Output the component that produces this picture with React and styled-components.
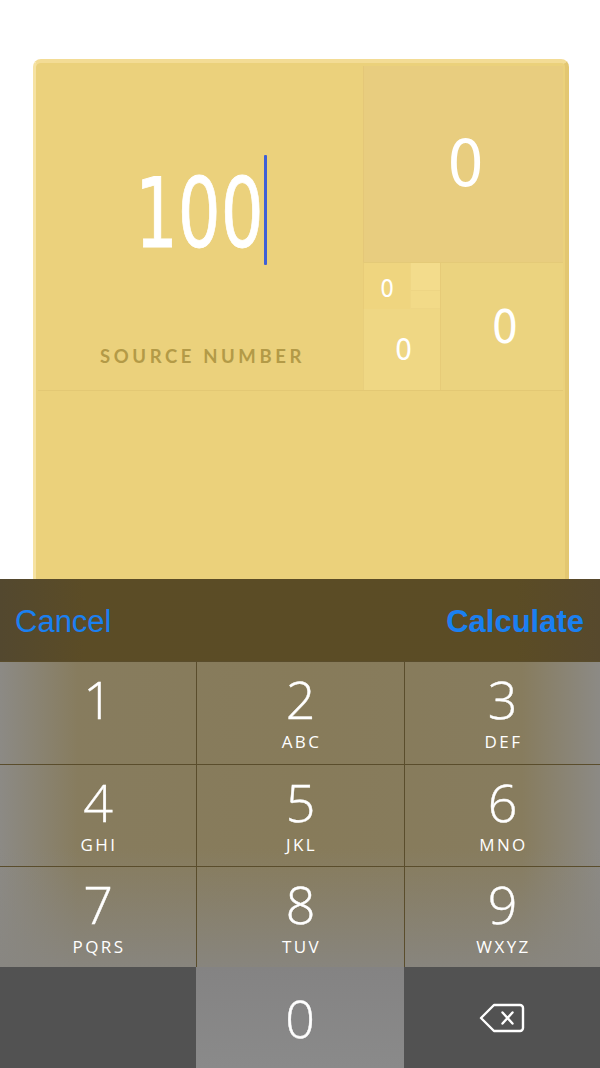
import React from 'react';
import styled, { createGlobalStyle } from 'styled-components';

const GlobalStyle = createGlobalStyle`
  html, body {
    margin: 0;
    padding: 0;
    background: #ffffff;
    font-family: "Liberation Sans", Arial, sans-serif;
  }
`;

// ページ全体
const Page = styled.div`
  width: 600px;
  height: 1068px;
  overflow: hidden;
  padding: 59px 31px 0 33px;
  box-sizing: border-box;
`;

// カード
const Card = styled.div`
  height: 560px;
  box-sizing: border-box;
  background-color: #ebd17b;
  border-radius: 8px;
  border-top: 4px solid #f3dc95;
  border-left: 3px solid #f6e2a2;
  border-right: 4px solid #e3c771;
  padding: 3px 2px 0 2px;
`;

const SpiralGrid = styled.div`
  display: grid;
  grid-template-columns: 325px 200px;
  grid-template-rows: 196px 128px;
  border-bottom: 1px solid #e3c874;
`;

const SourcePanel = styled.div`
  grid-row: 1 / 3;
  background-color: #ebd17c;
  display: flex;
  flex-direction: column;
  align-items: center;
`;

const InputLine = styled.div`
  margin-top: 89px;
  height: 110px;
  display: flex;
  align-items: center;
`;

const NumberBox = styled.span`
  display: inline-block;
  width: 128px;
  overflow: visible;
  white-space: nowrap;
`;

const BigNumber = styled.span`
  display: inline-block;
  font-family: "DejaVu Sans Condensed", "DejaVu Sans", sans-serif;
  font-size: 96px;
  line-height: 1;
  color: #ffffff;
  transform: scaleX(0.78);
  transform-origin: left center;
  margin-top: 8px;
  -webkit-text-stroke: 0.8px #ffffff;
`;

const Caret = styled.span`
  display: inline-block;
  width: 3px;
  height: 110px;
  margin-left: 1px;
  background-color: #3f5fd6;
  border-radius: 1px;
`;

const SourceLabel = styled.div`
  margin-top: 80px;
  margin-left: 4px;
  font-family: Lato, "Liberation Sans", sans-serif;
  font-weight: 700;
  font-size: 18.5px;
  letter-spacing: 3.6px;
  color: #b39a47;
`;

const Cell = styled.div`
  display: flex;
  align-items: center;
  justify-content: center;
  background-color: ${(p) => p.bg};
  font-family: "DejaVu Sans Condensed", "DejaVu Sans", sans-serif;
  font-size: ${(p) => p.size}px;
  line-height: 1;
  color: #ffffff;
  padding-top: ${(p) => p.drop || 0}px;
  padding-left: ${(p) => p.shift || 0}px;
  box-sizing: border-box;
  border-left: 1px solid rgba(220, 190, 110, 0.35);
`;

const LowerRight = styled.div`
  display: grid;
  grid-template-columns: 77px 123px;
  border-top: 1px solid #e4ca78;
`;

const SmallColumn = styled.div`
  display: grid;
  grid-template-rows: 46px 1fr;
`;

const TinyRow = styled.div`
  display: grid;
  grid-template-columns: 47px 30px;
`;

const TinyStack = styled.div`
  display: grid;
  grid-template-rows: 28px 18px;
  background-color: #f3dc8b;
  border-left: 1px solid #efd684;
`;

const TinyBlock = styled.div`
  background-color: ${(p) => p.bg};
  border-bottom: 1px solid #eed584;
`;

// キーボード（画面下に重なる）
const Keyboard = styled.div`
  position: fixed;
  left: 0;
  bottom: 0;
  width: 600px;
  height: 489px;
  display: flex;
  flex-direction: column;
`;

const Toolbar = styled.div`
  height: 82px;
  flex-shrink: 0;
  display: flex;
  align-items: center;
  justify-content: space-between;
  padding: 0 16px 0 15px;
  background: linear-gradient(to right, #53482f 0%, #5b4c26 14%, #5b4c25 86%, #57492d 100%);
`;

const ToolbarButton = styled.span`
  font-family: "Liberation Sans", Arial, sans-serif;
  font-size: 31px;
  color: #1a80f2;
  font-weight: ${(p) => (p.strong ? 700 : 400)};
  margin-top: 4px;
`;

const KeyPad = styled.div`
  flex: 1;
  display: grid;
  grid-template-columns: 196px 208px 196px;
  grid-template-rows: 103px 102px 101px 1fr;
  background:
    linear-gradient(to bottom, rgba(136, 134, 129, 0) 0%, rgba(136, 134, 129, 0) 46%, rgba(136, 134, 129, 0.9) 75%, rgba(136, 134, 129, 0.9) 100%),
    linear-gradient(to right, #8c8a85 0%, #877c5e 13%, #877b5a 50%, #877c5e 87%, #8c8a85 100%);
`;

const Key = styled.div`
  display: flex;
  flex-direction: column;
  align-items: center;
  justify-content: flex-start;
  padding-top: 12px;
  box-sizing: border-box;
  border-top: 1px solid #5a4d2c;
  border-left: ${(p) => (p.first ? 'none' : '1px solid #5a4d2c')};
  background: ${(p) => p.bg || 'transparent'};
  color: #ffffff;
`;

const Digit = styled.span`
  font-family: "Open Sans", "DejaVu Sans", sans-serif;
  font-weight: 300;
  font-size: 52px;
  line-height: 50px;
  -webkit-text-stroke: 0.4px #ffffff;
`;

const Letters = styled.span`
  font-family: "Open Sans", "DejaVu Sans", sans-serif;
  font-size: 17px;
  letter-spacing: 2.4px;
  margin-top: 9px;
  margin-left: 2px;
  line-height: 18px;
`;

const BottomKey = styled(Key)`
  justify-content: center;
  padding-top: 0;
  border-top: none;
  border-left: none;
`;

const BackspaceIcon = () => (
  <svg width="48" height="32" viewBox="0 0 48 32" fill="none">
    <path
      d="M16 3 H42 a3 3 0 0 1 3 3 V26 a3 3 0 0 1 -3 3 H16 L3 16 Z"
      stroke="#ffffff"
      strokeWidth="2.4"
      strokeLinejoin="round"
    />
    <path d="M24.5 10.5 L34.5 21.5 M34.5 10.5 L24.5 21.5" stroke="#ffffff" strokeWidth="2.4" strokeLinecap="round" />
  </svg>
);

const KEYS = [
  ['1', ''],
  ['2', 'ABC'],
  ['3', 'DEF'],
  ['4', 'GHI'],
  ['5', 'JKL'],
  ['6', 'MNO'],
  ['7', 'PQRS'],
  ['8', 'TUV'],
  ['9', 'WXYZ'],
];

export default function App() {
  return (
    <>
      <GlobalStyle />
      <Page>
        <Card>
          <SpiralGrid>
            <SourcePanel>
              <InputLine>
                <NumberBox>
                  <BigNumber>100</BigNumber>
                </NumberBox>
                <Caret />
              </InputLine>
              <SourceLabel>SOURCE NUMBER</SourceLabel>
            </SourcePanel>
            <Cell bg="#e8cd7f" size={64} shift={4}>0</Cell>
            <LowerRight>
              <SmallColumn>
                <TinyRow>
                  <Cell bg="#efd57f" size={24} drop={6}>0</Cell>
                  <TinyStack>
                    <TinyBlock bg="#f3dc8c" />
                    <TinyBlock bg="#f2da88" />
                  </TinyStack>
                </TinyRow>
                <Cell bg="#efd784" size={30} shift={3}>0</Cell>
              </SmallColumn>
              <Cell bg="#ebd37f" size={46} shift={6}>0</Cell>
            </LowerRight>
          </SpiralGrid>
        </Card>
      </Page>

      <Keyboard>
        <Toolbar>
          <ToolbarButton>Cancel</ToolbarButton>
          <ToolbarButton strong>Calculate</ToolbarButton>
        </Toolbar>
        <KeyPad>
          {KEYS.map(([d, l], i) => (
            <Key key={d} first={i % 3 === 0}>
              <Digit>{d}</Digit>
              {l && <Letters>{l}</Letters>}
            </Key>
          ))}
          <BottomKey bg="#525252" />
          <BottomKey bg="linear-gradient(to bottom, #848383, #8a8a8a)">
            <Digit>0</Digit>
          </BottomKey>
          <BottomKey bg="#525252">
            <BackspaceIcon />
          </BottomKey>
        </KeyPad>
      </Keyboard>
    </>
  );
}
